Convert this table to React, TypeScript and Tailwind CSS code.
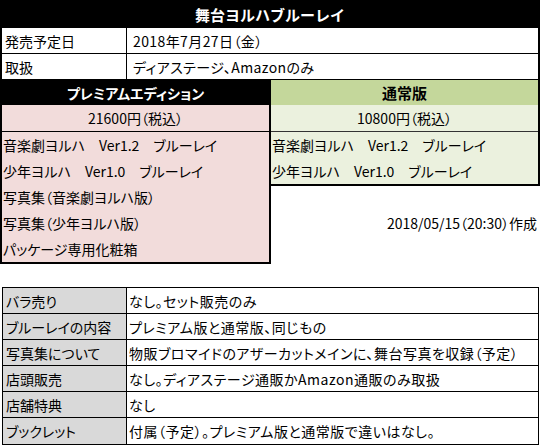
const font = "font-['Noto_Sans_CJK_JP',sans-serif] [font-feature-settings:'palt']";

const infoRows = [
  ["発売予定日", "2018年7月27日（金）"],
  ["取扱", "ディアステージ、Amazonのみ"],
];

const premiumItems = [
  "音楽劇ヨルハ　Ver1.2　ブルーレイ",
  "少年ヨルハ　Ver1.0　ブルーレイ",
  "写真集（音楽劇ヨルハ版）",
  "写真集（少年ヨルハ版）",
  "パッケージ専用化粧箱",
];

const normalItems = [
  "音楽劇ヨルハ　Ver1.2　ブルーレイ",
  "少年ヨルハ　Ver1.0　ブルーレイ",
];

const notes = [
  ["バラ売り", "なし。セット販売のみ"],
  ["ブルーレイの内容", "プレミアム版と通常版、同じもの"],
  ["写真集について", "物販ブロマイドのアザーカットメインに、舞台写真を収録（予定）"],
  ["店頭販売", "なし。ディアステージ通販かAmazon通販のみ取扱"],
  ["店舗特典", "なし"],
  ["ブックレット", "付属（予定）。プレミアム版と通常版で違いはなし。"],
];

export default function App() {
  return (
    <div className={`w-[541px] h-[446px] bg-white text-black text-[14px] leading-none overflow-hidden ${font}`}>
      {/* title */}
      <div className="w-[540px] h-[28px] bg-black text-white font-bold text-[15px] [font-feature-settings:normal] flex items-center justify-center">
        舞台ヨルハブルーレイ
      </div>

      {/* release info */}
      <div className="w-[540px] border-x-2 border-black">
        {infoRows.map(([label, value]) => (
          <div key={label} className="h-[26px] flex border-b border-black">
            <div className="w-[125px] border-r border-black flex items-center pl-[3px]">{label}</div>
            <div className="flex-1 flex items-center pl-[6px] tracking-[0.4px]">{value}</div>
          </div>
        ))}
      </div>

      {/* editions */}
      <div className="w-[540px] flex items-start">
        <div className="w-[271px]">
          <div className="h-[25px] bg-black text-white font-bold text-[14px] flex items-center justify-center">
            プレミアムエディション
          </div>
          <div className="bg-[#f2dcdb] border-x-2 border-b-2 border-black">
            <div className="h-[27px] border-b border-black flex items-center justify-center">
              21600円（税込）
            </div>
            {premiumItems.map((item) => (
              <div key={item} className="h-[26px] flex items-center pl-[1px]">{item}</div>
            ))}
          </div>
        </div>

        <div className="flex-1">
          <div className="bg-[#ebf1de] border-r-2 border-b-2 border-black">
            <div className="h-[25px] bg-[#c4d79b] font-bold text-[15px] flex items-center justify-center">
              通常版
            </div>
            <div className="h-[27px] border-b border-[#333] flex items-center justify-center">
              10800円（税込）
            </div>
            {normalItems.map((item) => (
              <div key={item} className="h-[26px] flex items-center pl-[1px]">{item}</div>
            ))}
          </div>
          <div className="mt-[24px] h-[26px] flex items-center justify-end pr-[3px] text-[14px]">
            2018/05/15（20:30）作成
          </div>
        </div>
      </div>

      {/* notes */}
      <div className="mt-[23px] ml-[2px] w-[537px] border border-black">
        {notes.map(([label, value], i) => (
          <div
            key={label}
            className={`h-[26px] flex ${i < notes.length - 1 ? "border-b border-black" : ""}`}
          >
            <div className="w-[124px] bg-[#d9d9d9] border-r border-black flex items-center pl-[3px]">{label}</div>
            <div className="flex-1 flex items-center pl-[2px] whitespace-nowrap tracking-[0.5px]">{value}</div>
          </div>
        ))}
      </div>
    </div>
  );
}
